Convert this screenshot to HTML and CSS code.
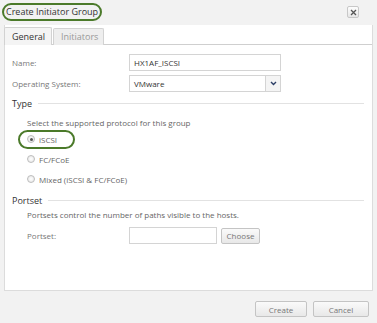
FILE: index.html
```html
<!DOCTYPE html>
<html lang="en">
<head>
    <title>Create Initiator Group</title>
    <meta name="viewport" content="width=device-width, initial-scale=1.0">
    <link rel="stylesheet" href="styles.css">
</head>
<body>

    <div class="dialog">
        <!-- Title bar -->
        <div class="titlebar">
            <span class="title">Create Initiator Group</span>
            <button class="close-btn" aria-label="Close">
                <svg width="7" height="7" viewBox="0 0 7 7">
                    <path d="M1 1 L6 6 M6 1 L1 6" stroke="#555" stroke-width="1.3"/>
                </svg>
            </button>
        </div>

        <section class="tab-panel">
            <div class="tabs">
                <div class="tab active">General</div>
                <div class="tab">Initiators</div>
            </div>

            <div class="tab-content">
                <div class="form-row">
                    <label class="form-label">Name:</label>
                    <input class="text-input wide" type="text" value="HX1AF_ISCSI">
                </div>
                <div class="form-row">
                    <label class="form-label">Operating System:</label>
                    <div class="select-box">
                        <span class="select-value">VMware</span>
                        <span class="select-arrow">
                            <svg width="7" height="5" viewBox="0 0 7 5">
                                <path d="M1 1 L3.5 3.5 L6 1" stroke="#2c3e66" stroke-width="1.4" fill="none"/>
                            </svg>
                        </span>
                    </div>
                </div>

                <div class="section-title"><span>Type</span></div>
                <p class="section-desc">Select the supported protocol for this group</p>
                <div class="radio-row">
                    <span class="radio-wrap highlight">
                        <span class="radio checked"></span>iSCSI
                    </span>
                </div>
                <div class="radio-row">
                    <span class="radio-wrap"><span class="radio"></span>FC/FCoE</span>
                </div>
                <div class="radio-row">
                    <span class="radio-wrap"><span class="radio"></span>Mixed (iSCSI &amp; FC/FCoE)</span>
                </div>

                <div class="section-title"><span>Portset</span></div>
                <p class="section-desc small-gap">Portsets control the number of paths visible to the hosts.</p>
                <div class="form-row indent">
                    <label class="form-label short">Portset:</label>
                    <input class="text-input narrow" type="text">
                    <button class="btn small">Choose</button>
                </div>
            </div>
        </section>

        <div class="footer">
            <button class="btn">Create</button>
            <button class="btn cancel">Cancel</button>
        </div>
    </div>

</body>
</html>
```

FILE: styles.css
```css
body {
    margin: 0;
    background-color: #f2f2f2;
    font-family: 'Open Sans', sans-serif;
    font-size: 8px;
    color: #666;
}

.dialog {
    width: 377px;
    height: 323px;
    box-sizing: border-box;
}

/* Title bar */
.titlebar {
    height: 25px;
    display: flex;
    align-items: flex-start;
    justify-content: space-between;
    padding: 3px 18px 0 2px;
    box-sizing: border-box;
}

.title {
    font-size: 9px;
    color: #333;
    padding: 1px 2px 2px 2px;
    border: 2px solid #4b7a2a;
    border-radius: 9px;
    line-height: 11px;
}

.close-btn {
    width: 12px;
    height: 12px;
    margin-top: 3px;
    padding: 0;
    border: 1px solid #c8c8c8;
    border-radius: 2px;
    background: linear-gradient(#fdfdfd, #e6e6e6);
    display: flex;
    align-items: center;
    justify-content: center;
}

/* Tab panel */
.tab-panel {
    margin-left: 4px;
    width: 369px;
    height: 266px;
    box-sizing: border-box;
    background: #fff;
    border: 1px solid #dcdcdc;
    border-top: none;
    display: flex;
    flex-direction: column;
}

.tabs {
    display: flex;
    gap: 1px;
    height: 20px;
    padding-top: 2px;
    box-sizing: border-box;
    border-bottom: 1px solid #cfcfcf;
    margin-left: -1px;
}

.tab {
    height: 18px;
    box-sizing: border-box;
    border: 1px solid #d2d2d2;
    border-bottom: none;
    border-radius: 2px 2px 0 0;
    background: #eeeeee;
    color: #999;
    font-size: 9px;
    line-height: 17px;
    padding: 0 7px;
}

.tab.active {
    width: 48px;
    color: #333;
    background: #f4f4f4;
    text-align: center;
}

.tab:not(.active) {
    width: 51px;
    margin-top: 1px;
    height: 17px;
    line-height: 16px;
}

.tab-content {
    padding: 9px 8px 0 7px;
}

/* Form rows */
.form-row {
    display: flex;
    align-items: center;
    height: 17px;
    margin-bottom: 4px;
}

.form-row.indent {
    padding-left: 15px;
    margin-top: 6px;
}

.form-label {
    width: 117px;
    flex-shrink: 0;
    color: #777;
}

.form-label.short {
    width: 102px;
}

.text-input {
    height: 17px;
    box-sizing: border-box;
    border: 1px solid #d4d4d4;
    padding: 0 4px;
    font-family: inherit;
    font-size: 8px;
    color: #333;
    background: #fff;
}

.text-input.wide {
    width: 152px;
}

.text-input.narrow {
    width: 88px;
}

.select-box {
    width: 152px;
    height: 17px;
    box-sizing: border-box;
    border: 1px solid #d4d4d4;
    display: flex;
    align-items: center;
    color: #333;
}

.select-value {
    flex: 1;
    padding-left: 4px;
}

.select-arrow {
    width: 14px;
    height: 15px;
    border-left: 1px solid #d4d4d4;
    background: #f4f4f4;
    display: flex;
    align-items: center;
    justify-content: center;
}

/* Sections */
.section-title {
    display: flex;
    align-items: center;
    gap: 6px;
    height: 12px;
    margin-top: 5px;
    color: #333;
    font-size: 9px;
}

.section-title::after {
    content: "";
    flex: 1;
    height: 1px;
    background: #e2e2e2;
}

.section-desc {
    margin: 8px 0 0 15px;
    line-height: 12px;
    height: 12px;
}

.section-desc.small-gap {
    margin-top: 3px;
}

.radio-row {
    height: 20px;
    display: flex;
    align-items: center;
    padding-left: 6px;
}

.radio-wrap {
    display: flex;
    align-items: center;
    gap: 4px;
    padding: 2px 0 2px 7px;
    border: 2px solid transparent;
    border-radius: 10px;
    white-space: nowrap;
}

.radio-wrap.highlight {
    border-color: #4b7a2a;
    width: 46px;
}

.radio {
    width: 8px;
    height: 8px;
    flex-shrink: 0;
    box-sizing: border-box;
    border-radius: 50%;
    border: 1px solid #bdbdbd;
    background: radial-gradient(#ffffff, #e4e4e4);
    position: relative;
}

.radio.checked::after {
    content: "";
    position: absolute;
    top: 1.5px;
    left: 1.5px;
    width: 3px;
    height: 3px;
    border-radius: 50%;
    background: #555;
}

/* Buttons */
.btn {
    height: 16px;
    width: 52px;
    padding: 0;
    border: 1px solid #c4c4c4;
    border-radius: 2px;
    background: linear-gradient(#fafafa, #e8e8e8);
    font-family: inherit;
    font-size: 8px;
    color: #777;
}

.btn.small {
    width: 39px;
    height: 16px;
    margin-left: 4px;
}

.btn.cancel {
    width: 56px;
}

.footer {
    display: flex;
    justify-content: flex-end;
    gap: 6px;
    padding: 10px 8px 0 0;
}
```
